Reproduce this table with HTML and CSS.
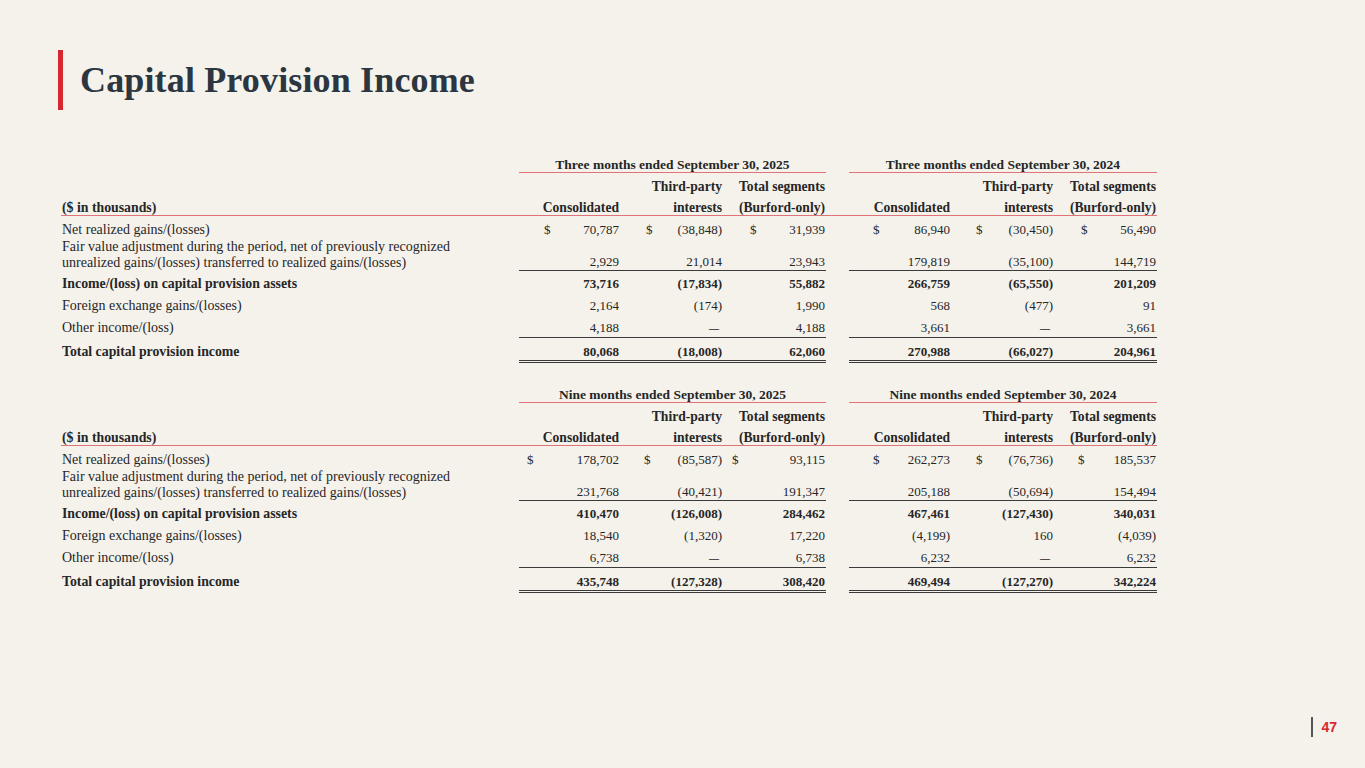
FILE: index.html
```html
<!DOCTYPE html>
<html lang="en">
<head>
<meta charset="utf-8">
<title>Capital Provision Income</title>
<link rel="stylesheet" href="styles.css">
</head>
<body>
<div class="page">
  <h1 class="title">Capital Provision Income</h1>

  <div class="fin">
    <div class="row r-group">
      <div class="lbl"></div>
      <div class="grp">Three months ended September 30, 2025</div>
      <div class="sp"></div>
      <div class="grp">Three months ended September 30, 2024</div>
    </div>
    <div class="row r-sub">
      <div class="lbl"></div>
      <div class="n"></div><div class="n">Third-party</div><div class="n">Total segments</div>
      <div class="sp"></div>
      <div class="n"></div><div class="n">Third-party</div><div class="n">Total segments</div>
    </div>
    <div class="row r-head">
      <div class="lbl">($ in thousands)</div>
      <div class="n">Consolidated</div><div class="n">interests</div><div class="n">(Burford-only)</div>
      <div class="sp"></div>
      <div class="n">Consolidated</div><div class="n">interests</div><div class="n">(Burford-only)</div>
    </div>
    <div class="row r-net">
      <div class="lbl">Net realized gains/(losses)</div>
      <div class="n"><span class="cur c25">$</span><span>70,787</span></div>
      <div class="n"><span class="cur c26">$</span><span>(38,848)</span></div>
      <div class="n"><span class="cur c27">$</span><span>31,939</span></div>
      <div class="sp"></div>
      <div class="n"><span class="cur c24">$</span><span>86,940</span></div>
      <div class="n"><span class="cur c25">$</span><span>(30,450)</span></div>
      <div class="n"><span class="cur c27">$</span><span>56,490</span></div>
    </div>
    <div class="row r-fair">
      <div class="lbl">Fair value adjustment during the period, net of previously recognized<br>unrealized gains/(losses) transferred to realized gains/(losses)</div>
      <div class="n">2,929</div><div class="n">21,014</div><div class="n">23,943</div>
      <div class="sp"></div>
      <div class="n">179,819</div><div class="n">(35,100)</div><div class="n">144,719</div>
    </div>
    <div class="row r-inc">
      <div class="lbl">Income/(loss) on capital provision assets</div>
      <div class="n">73,716</div><div class="n">(17,834)</div><div class="n">55,882</div>
      <div class="sp"></div>
      <div class="n">266,759</div><div class="n">(65,550)</div><div class="n">201,209</div>
    </div>
    <div class="row r-fx">
      <div class="lbl">Foreign exchange gains/(losses)</div>
      <div class="n">2,164</div><div class="n">(174)</div><div class="n">1,990</div>
      <div class="sp"></div>
      <div class="n">568</div><div class="n">(477)</div><div class="n">91</div>
    </div>
    <div class="row r-oth">
      <div class="lbl">Other income/(loss)</div>
      <div class="n">4,188</div><div class="n"><span class="dash">—</span></div><div class="n">4,188</div>
      <div class="sp"></div>
      <div class="n">3,661</div><div class="n"><span class="dash">—</span></div><div class="n">3,661</div>
    </div>
    <div class="row r-tot">
      <div class="lbl">Total capital provision income</div>
      <div class="n">80,068</div><div class="n">(18,008)</div><div class="n">62,060</div>
      <div class="sp"></div>
      <div class="n">270,988</div><div class="n">(66,027)</div><div class="n">204,961</div>
    </div>
  </div>

  <div class="fin fin-second">
    <div class="row r-group">
      <div class="lbl"></div>
      <div class="grp">Nine months ended September 30, 2025</div>
      <div class="sp"></div>
      <div class="grp">Nine months ended September 30, 2024</div>
    </div>
    <div class="row r-sub">
      <div class="lbl"></div>
      <div class="n"></div><div class="n">Third-party</div><div class="n">Total segments</div>
      <div class="sp"></div>
      <div class="n"></div><div class="n">Third-party</div><div class="n">Total segments</div>
    </div>
    <div class="row r-head">
      <div class="lbl">($ in thousands)</div>
      <div class="n">Consolidated</div><div class="n">interests</div><div class="n">(Burford-only)</div>
      <div class="sp"></div>
      <div class="n">Consolidated</div><div class="n">interests</div><div class="n">(Burford-only)</div>
    </div>
    <div class="row r-net">
      <div class="lbl">Net realized gains/(losses)</div>
      <div class="n"><span class="cur c8">$</span><span>178,702</span></div>
      <div class="n"><span class="cur c24">$</span><span>(85,587)</span></div>
      <div class="n"><span class="cur c9">$</span><span>93,115</span></div>
      <div class="sp"></div>
      <div class="n"><span class="cur c24">$</span><span>262,273</span></div>
      <div class="n"><span class="cur c25">$</span><span>(76,736)</span></div>
      <div class="n"><span class="cur c24">$</span><span>185,537</span></div>
    </div>
    <div class="row r-fair">
      <div class="lbl">Fair value adjustment during the period, net of previously recognized<br>unrealized gains/(losses) transferred to realized gains/(losses)</div>
      <div class="n">231,768</div><div class="n">(40,421)</div><div class="n">191,347</div>
      <div class="sp"></div>
      <div class="n">205,188</div><div class="n">(50,694)</div><div class="n">154,494</div>
    </div>
    <div class="row r-inc">
      <div class="lbl">Income/(loss) on capital provision assets</div>
      <div class="n">410,470</div><div class="n">(126,008)</div><div class="n">284,462</div>
      <div class="sp"></div>
      <div class="n">467,461</div><div class="n">(127,430)</div><div class="n">340,031</div>
    </div>
    <div class="row r-fx">
      <div class="lbl">Foreign exchange gains/(losses)</div>
      <div class="n">18,540</div><div class="n">(1,320)</div><div class="n">17,220</div>
      <div class="sp"></div>
      <div class="n">(4,199)</div><div class="n">160</div><div class="n">(4,039)</div>
    </div>
    <div class="row r-oth">
      <div class="lbl">Other income/(loss)</div>
      <div class="n">6,738</div><div class="n"><span class="dash">—</span></div><div class="n">6,738</div>
      <div class="sp"></div>
      <div class="n">6,232</div><div class="n"><span class="dash">—</span></div><div class="n">6,232</div>
    </div>
    <div class="row r-tot">
      <div class="lbl">Total capital provision income</div>
      <div class="n">435,748</div><div class="n">(127,328)</div><div class="n">308,420</div>
      <div class="sp"></div>
      <div class="n">469,494</div><div class="n">(127,270)</div><div class="n">342,224</div>
    </div>
  </div>

  <div class="footer"><span class="pbar"></span><span class="pnum">47</span></div>
</div>
</body>
</html>
```

FILE: styles.css
```css
* { box-sizing: border-box; }
html, body { margin: 0; padding: 0; }
body {
  background: #f5f2ec;
  font-family: "Liberation Serif", "Times New Roman", serif;
  color: #262626;
}
.page {
  width: 1365px;
  height: 768px;
  display: flex;
  flex-direction: column;
  overflow: hidden;
}
.title {
  margin: 50px 0 0 58px;
  height: 60px;
  border-left: 5px solid #d7282f;
  padding-left: 17px;
  display: flex;
  align-items: center;
  font-size: 36px;
  font-weight: bold;
  color: #2c3641;
  letter-spacing: 0.15px;
}
.fin {
  margin: 46px 0 0 61px;
  width: 1096px;
  display: grid;
  grid-template-columns: 458px 101px 103px 103px 23px 102px 103px 103px;
  font-size: 13px;
  line-height: 16px;
}
.fin-second { margin-top: 23px; }
.row { display: contents; }
.lbl { padding-left: 1px; font-size: 14px; }
.n {
  text-align: right;
  padding-right: 1px;
  white-space: nowrap;
}
.n:has(.cur) {
  display: flex;
  justify-content: space-between;
}
.cur.c8 { padding-left: 8px; }
.cur.c9 { padding-left: 9px; }
.cur.c24 { padding-left: 24px; }
.cur.c25 { padding-left: 25px; }
.cur.c26 { padding-left: 26px; }
.cur.c27 { padding-left: 27px; }
.dash {
  font-size: 10px;
  font-weight: bold;
  padding-right: 3px;
}

/* group header */
.r-group > div { height: 17px; padding-top: 2px; line-height: 14px; }
.grp {
  grid-column: span 3;
  text-align: center;
  font-weight: bold;
  font-size: 13.5px;
  border-bottom: 1px solid #e0737a;
}
/* sub header */
.r-sub > div {
  padding-top: 6px;
  line-height: 15px;
  font-weight: bold;
  font-size: 13.6px;
}
/* column header */
.r-head > div {
  padding-top: 6px;
  line-height: 15px;
  font-weight: bold;
  font-size: 13.6px;
  border-bottom: 1px solid #e0737a;
}
.r-head > .lbl { font-size: 13.8px; }
.r-net > div { padding-top: 6px; }
.r-fair > .n { align-self: end; }
.r-fair > div { padding-top: 1px; }
.r-fair > .n { border-bottom: 1px solid #3a3a3a; }
.r-inc > div { padding-top: 5px; padding-bottom: 1px; font-weight: bold; }
.r-inc > .lbl, .r-tot > .lbl { font-size: 13.8px; }
.r-fx > div { padding-top: 5px; padding-bottom: 1px; }
.r-oth > div { padding-top: 5px; }
.r-oth > .n { border-bottom: 1px solid #3a3a3a; }
.r-tot > div { padding-top: 6px; font-weight: bold; }
.r-tot > .n { border-bottom: 3px double #3a3a3a; }

.footer {
  margin-top: auto;
  margin-bottom: 31px;
  margin-right: 28px;
  align-self: flex-end;
  display: flex;
  align-items: center;
  gap: 8px;
}
.pbar {
  width: 2px;
  height: 20px;
  background: #555;
}
.pnum {
  font-family: "Liberation Sans", Arial, sans-serif;
  font-weight: bold;
  font-size: 14px;
  color: #d7282f;
}
```
